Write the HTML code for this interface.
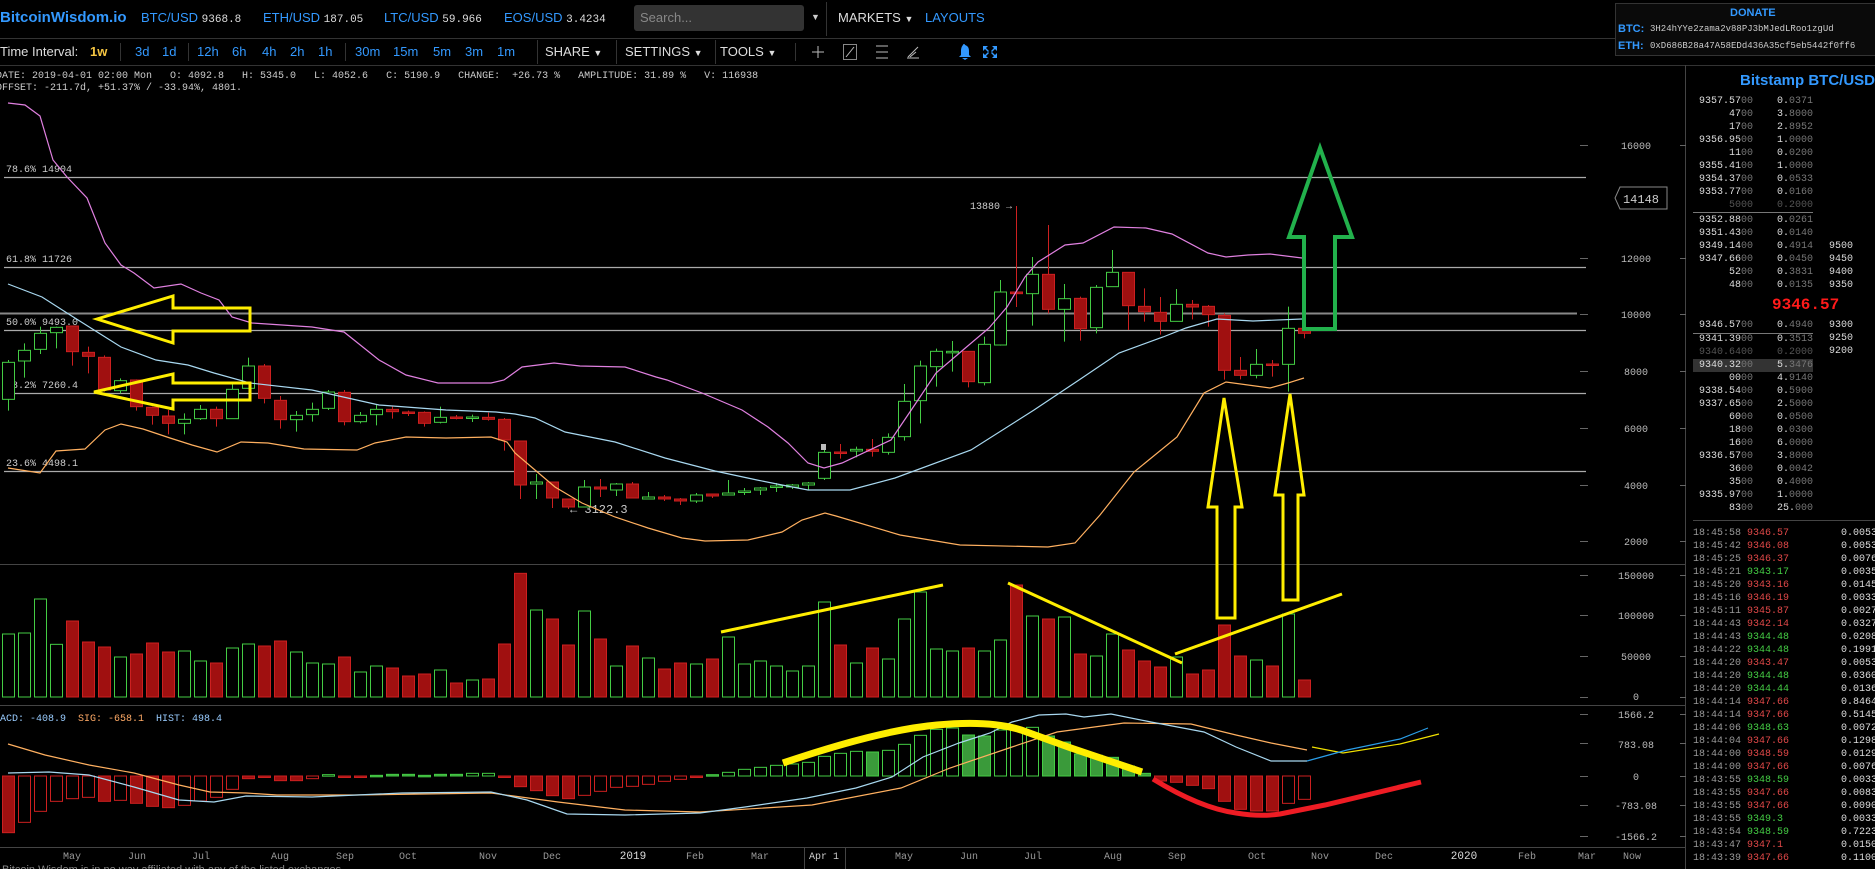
<!DOCTYPE html>
<html><head><meta charset="utf-8">
<style>
html,body{margin:0;padding:0;background:#000;width:1875px;height:869px;overflow:hidden;position:relative;font-family:"Liberation Sans",sans-serif;}
.t{position:absolute;white-space:pre;line-height:1;}
.n{font-family:"Liberation Sans Narrow","Liberation Sans",sans-serif;}
.m{font-family:"Liberation Mono",monospace;}
.b{color:#3399ff}
.w{color:#ddd}
.sep{position:absolute;width:1px;background:#333;}
.ob{position:absolute;font-family:"Liberation Mono",monospace;font-size:10px;color:#ddd;white-space:pre;line-height:13px;}
.ob span.d{color:#777}
.r{color:#e04848}.g{color:#44cc44}
</style></head><body>
<!-- top bar -->
<div class="t n" style="left:0;top:10px;font-size:15px;font-weight:bold;color:#3399ff">BitcoinWisdom.io</div>
<div class="t n b" style="left:141px;top:11px;font-size:13px">BTC/USD <span class="m w" style="font-size:11px">9368.8</span></div>
<div class="t n b" style="left:263px;top:11px;font-size:13px">ETH/USD <span class="m w" style="font-size:11px">187.05</span></div>
<div class="t n b" style="left:384px;top:11px;font-size:13px">LTC/USD <span class="m w" style="font-size:11px">59.966</span></div>
<div class="t n b" style="left:504px;top:11px;font-size:13px">EOS/USD <span class="m w" style="font-size:11px">3.4234</span></div>
<div style="position:absolute;left:634px;top:5px;width:170px;height:26px;background:#333;border-radius:3px"></div>
<div class="t n" style="left:640px;top:11px;font-size:13px;color:#888">Search...</div>
<div class="t" style="left:811px;top:13px;font-size:9px;color:#ccc">▼</div>
<div class="sep" style="left:826px;top:2px;height:34px"></div>
<div class="t n w" style="left:838px;top:11px;font-size:13px">MARKETS <span style="font-size:9px">▼</span></div>
<div class="t n b" style="left:925px;top:11px;font-size:13px">LAYOUTS</div>
<div style="position:absolute;left:0;top:38px;width:1615px;height:1px;background:#333"></div>
<!-- donate -->
<div style="position:absolute;left:1615px;top:3px;width:262px;height:51px;border:1px solid #333;background:#0a0a0a"></div>
<div class="t" style="left:1730px;top:8px;font-size:11px;font-weight:bold;color:#3399ff">DONATE</div>
<div class="t" style="left:1618px;top:24px;font-size:11px;font-weight:bold;color:#3399ff">BTC:</div>
<div class="t m" style="left:1650px;top:25px;font-size:9px;color:#ccc">3H24hYYe2zama2v88PJ3bMJedLRoo1zgUd</div>
<div class="t" style="left:1618px;top:41px;font-size:11px;font-weight:bold;color:#3399ff">ETH:</div>
<div class="t m" style="left:1650px;top:42px;font-size:9px;color:#ccc">0xD686B28a47A58EDd436A35cf5eb5442f0ff6</div>
<!-- toolbar -->
<div class="t n w" style="left:0;top:45px;font-size:13px">Time Interval:</div>
<div class="t n" style="left:90px;top:45px;font-size:13px;color:#f5c542;font-weight:bold">1w</div>
<div class="sep" style="left:120px;top:43px;height:18px"></div>
<div class="t n b" style="left:135px;top:45px;font-size:13px">3d</div>
<div class="t n b" style="left:162px;top:45px;font-size:13px">1d</div>
<div class="sep" style="left:188px;top:43px;height:18px"></div>
<div class="t n b" style="left:197px;top:45px;font-size:13px">12h</div>
<div class="t n b" style="left:232px;top:45px;font-size:13px">6h</div>
<div class="t n b" style="left:262px;top:45px;font-size:13px">4h</div>
<div class="t n b" style="left:290px;top:45px;font-size:13px">2h</div>
<div class="t n b" style="left:318px;top:45px;font-size:13px">1h</div>
<div class="sep" style="left:345px;top:43px;height:18px"></div>
<div class="t n b" style="left:355px;top:45px;font-size:13px">30m</div>
<div class="t n b" style="left:393px;top:45px;font-size:13px">15m</div>
<div class="t n b" style="left:433px;top:45px;font-size:13px">5m</div>
<div class="t n b" style="left:465px;top:45px;font-size:13px">3m</div>
<div class="t n b" style="left:497px;top:45px;font-size:13px">1m</div>
<div class="sep" style="left:537px;top:40px;height:24px"></div>
<div class="t n w" style="left:545px;top:45px;font-size:13px">SHARE <span style="font-size:9px">▼</span></div>
<div class="sep" style="left:616px;top:40px;height:24px"></div>
<div class="t n w" style="left:625px;top:45px;font-size:13px">SETTINGS <span style="font-size:9px">▼</span></div>
<div class="sep" style="left:715px;top:40px;height:24px"></div>
<div class="t n w" style="left:720px;top:45px;font-size:13px">TOOLS <span style="font-size:9px">▼</span></div>
<div class="sep" style="left:795px;top:43px;height:18px"></div>
<svg style="position:absolute;left:810px;top:42px" width="200" height="20">
<g stroke="#bbb" stroke-width="1" fill="none">
<path d="M8 4v12M2 10h12"/>
<rect x="33.5" y="2.5" width="13" height="15" stroke="#888"/><path d="M36 15l8-10"/>
<path d="M66 4h12M66 10h12M66 16h12"/>
<path d="M98 15l10-10M100 15l6-5M97 16h12"/>
</g>
<g fill="#3399ff"><path d="M153 3a1 1 0 0 1 2 0c3 1 4 3 4 6v4l2 2h-12l2-2v-4c0-3 1-5 2-6z"/><path d="M152 16h6l-3 2z"/>
<path d="M173 4h5l-2 2 3 3-1 1-3-3-2 2zM187 4v5l-2-2-3 3-1-1 3-3-2-2zM173 16v-5l2 2 3-3 1 1-3 3 2 2zM187 16h-5l2-2-3-3 1-1 3 3 2-2z"/></g>
</svg>
<div style="position:absolute;left:0;top:65px;width:1875px;height:1px;background:#333"></div>
<div class="t m" style="left:-4px;top:72px;font-size:10px;color:#ccc">DATE: 2019-04-01 02:00 Mon   O: 4092.8   H: 5345.0   L: 4052.6   C: 5190.9   CHANGE:  +26.73 %   AMPLITUDE: 31.89 %   V: 116938</div>
<div class="t m" style="left:-4px;top:84px;font-size:10px;color:#ccc">OFFSET: -211.7d, +51.37% / -33.94%, 4801.</div>

<svg id="ch" style="position:absolute;left:0;top:0" width="1686" height="869">
<g stroke="#444" stroke-width="1">
<line x1="0" y1="564.5" x2="1686" y2="564.5"/>
<line x1="0" y1="705.5" x2="1686" y2="705.5"/>
<line x1="0" y1="847.5" x2="1686" y2="847.5"/>
<line x1="1685.5" y1="65" x2="1685.5" y2="869"/>
<line x1="804.5" y1="847" x2="804.5" y2="869"/>
<line x1="845.5" y1="847" x2="845.5" y2="869"/>
</g>
<g stroke="#aaa" stroke-width="1.2">
<line x1="4" y1="177.5" x2="1586" y2="177.5"/>
<line x1="4" y1="267.5" x2="1586" y2="267.5"/>
<line x1="0" y1="313.5" x2="1577" y2="313.5" stroke="#888" stroke-width="2"/>
<line x1="4" y1="330.5" x2="1586" y2="330.5"/>
<line x1="4" y1="393.5" x2="1586" y2="393.5"/>
<line x1="4" y1="471.5" x2="1586" y2="471.5"/>
</g>
<g font-family="Liberation Mono,monospace" font-size="10" fill="#ccc">
<text x="6" y="172">78.6% 14904</text>
<text x="6" y="262">61.8% 11726</text>
<text x="6" y="325">50.0% 9493.0</text>
<text x="6" y="388">38.2% 7260.4</text>
<text x="6" y="466">23.6% 4498.1</text>
<text x="970" y="209">13880 →</text>
<text x="570" y="513" font-size="12">← 3122.3</text>
</g>
<g id="bands" fill="none" stroke-width="1.2">
<polyline stroke="#e080e0" points="8,103 25,105 40,116 53,160 67,177 87,198 105,243 121,265 134,273 154,288 181,284 201,293 219,300 232,317 252,323 312,327 344,332 379,360 406,375 438,383 491,383 504,380 522,367 554,363 580,366 625,367 656,377 667,380 702,393 742,410 768,427 788,443 808,463 824,468 842,463 891,440 918,400 936,373 963,350 989,328 1007,307 1025,277 1038,262 1065,245 1083,243 1114,227 1146,228 1172,234 1208,253 1226,257 1248,255 1270,254 1302,258"/>
<polyline stroke="#a8d8f0" points="8,284 42,297 67,313 94,330 121,347 156,360 188,365 214,373 250,383 312,390 379,405 446,410 496,412 515,414 535,418 565,432 615,442 665,458 715,471 757,480 782,485 808,490 850,490 895,478 971,450 1034,410 1079,380 1119,353 1163,337 1186,328 1217,319 1253,321 1302,319"/>
<polyline stroke="#ffb060" points="8,468 40,473 56,451 85,449 105,430 121,424 143,429 170,438 192,445 217,452 241,442 268,443 304,449 357,450 375,443 406,437 446,438 491,437 507,442 515,453 535,470 555,487 582,503 615,517 648,528 682,538 705,541 748,540 782,532 802,520 825,513 836,516 900,535 960,545 1048,547 1075,543 1100,515 1134,472 1177,437 1204,393 1226,382 1270,388 1288,383 1304,378"/>
<polyline stroke="#ffb060" points="8,744 45,755 89,765 134,773 179,785 210,792 246,793 277,795 357,795 491,793 558,802 625,810 700,812 812,805 901,788 950,768 1012,747 1057,732 1124,723 1191,724 1236,735 1271,743 1307,750"/>
<polyline stroke="#a8d8f0" points="8,773 49,772 89,775 134,787 179,800 214,802 246,796 312,797 402,793 491,792 527,800 567,814 625,815 700,813 745,807 807,798 856,788 892,777 923,757 959,743 990,733 1012,722 1039,715 1066,714 1084,717 1111,714 1151,722 1204,732 1236,747 1271,761 1307,761"/>
<polyline stroke="#f0e000" points="1312,747 1343,753 1400,744 1439,734"/>
<polyline stroke="#2a9ee8" points="1307,761 1347,750 1400,739 1428,728"/>
</g>
<g id="bars"></g>
<rect x="821" y="444" width="5" height="6" fill="#bbb"/>
<!-- annotations -->
<g fill="none" stroke="#ffee00" stroke-width="3" stroke-linejoin="miter">
<polygon points="97,319 173,296 173,308 250,308 250,331 173,331 173,343"/>
<polygon points="94,392 173,374 173,383 250,383 250,400 173,400 173,409"/>
<polygon points="1224,398 1242,507 1235,507 1235,618 1217,618 1217,507 1208,507"/>
<polygon points="1290,394 1304,495 1298,495 1298,600 1283,600 1283,495 1275,495"/>
<line x1="721" y1="632" x2="943" y2="585"/>
<line x1="1008" y1="583" x2="1182" y2="663"/>
<line x1="1175" y1="654" x2="1342" y2="594"/>
<path d="M783,763 Q880,730 937,725 Q990,720 1021,730 L1071,748 L1142,772" stroke-width="7"/>
</g>
<polygon points="1320,148 1352,237 1335,237 1335,329 1304,329 1304,237 1289,237" fill="none" stroke="#22b14c" stroke-width="4"/>
<path d="M1153,779 Q1200,808 1236,813 Q1260,817 1280,814 L1325,805 L1421,782" fill="none" stroke="#ee1c24" stroke-width="5"/>
<!-- axis ticks -->
<g stroke="#666"><path id="ticks" d=""/></g>
<g font-family="Liberation Mono,monospace" font-size="10" fill="#bbb" text-anchor="middle">
<text x="1636" y="149">16000</text>
<text x="1636" y="262">12000</text>
<text x="1636" y="318">10000</text>
<text x="1636" y="375">8000</text>
<text x="1636" y="432">6000</text>
<text x="1636" y="489">4000</text>
<text x="1636" y="545">2000</text>
<text x="1636" y="579">150000</text>
<text x="1636" y="619">100000</text>
<text x="1636" y="660">50000</text>
<text x="1636" y="700">0</text>
<text x="1636" y="718">1566.2</text>
<text x="1636" y="748">783.08</text>
<text x="1636" y="780">0</text>
<text x="1636" y="809">-783.08</text>
<text x="1636" y="840">-1566.2</text>
</g>
<path d="M1620,187 H1667 V209 H1620 L1615,198 Z" fill="#000" stroke="#888"/>
<text x="1641" y="203" font-family="Liberation Mono,monospace" font-size="12" fill="#ccc" text-anchor="middle">14148</text>
<g font-family="Liberation Mono,monospace" font-size="10" fill="#999" text-anchor="middle">
<text x="72" y="859">May</text><text x="137" y="859">Jun</text><text x="201" y="859">Jul</text><text x="280" y="859">Aug</text>
<text x="345" y="859">Sep</text><text x="408" y="859">Oct</text><text x="488" y="859">Nov</text><text x="552" y="859">Dec</text>
<text x="633" y="859" fill="#ddd" font-size="11">2019</text><text x="695" y="859">Feb</text><text x="760" y="859">Mar</text>
<text x="824" y="859" fill="#ccc">Apr 1</text><text x="904" y="859">May</text><text x="969" y="859">Jun</text><text x="1033" y="859">Jul</text>
<text x="1113" y="859">Aug</text><text x="1177" y="859">Sep</text><text x="1257" y="859">Oct</text><text x="1320" y="859">Nov</text>
<text x="1384" y="859">Dec</text><text x="1464" y="859" fill="#ddd" font-size="11">2020</text><text x="1527" y="859">Feb</text>
<text x="1587" y="859">Mar</text><text x="1632" y="859">Now</text>
</g>
<text x="-6" y="721" font-family="Liberation Mono,monospace" font-size="10"><tspan fill="#9cf">MACD: -408.9</tspan><tspan fill="#fa6" dx="12">SIG: -658.1</tspan><tspan fill="#9cf" dx="12">HIST: 498.4</tspan></text>
<text x="2" y="873" font-family="Liberation Sans,sans-serif" font-size="11" fill="#888">Bitcoin Wisdom is in no way affiliated with any of the listed exchanges</text>
</svg>

<!-- right panel -->
<div class="t" style="left:1740px;top:73px;font-size:15px;font-weight:bold;color:#3399ff">Bitstamp BTC/USD</div>
<div class="ob" style="left:1693px;top:95px;width:60px;text-align:right">9357.57<span class="d">00</span>
47<span class="d">00</span>
17<span class="d">00</span>
9356.95<span class="d">00</span>
11<span class="d">00</span>
9355.41<span class="d">00</span>
9354.37<span class="d">00</span>
9353.77<span class="d">00</span>
<span style="color:#555">5000</span></div>
<div class="ob" style="left:1753px;top:95px;width:60px;text-align:right">0.<span class="d">0371</span>
3.<span class="d">8000</span>
2.<span class="d">8952</span>
1.<span class="d">0000</span>
0.<span class="d">0200</span>
1.<span class="d">0000</span>
0.<span class="d">0533</span>
0.<span class="d">0160</span>
<span style="color:#555">0.2000</span></div>
<div style="position:absolute;left:1693px;top:212px;width:120px;height:1px;background:#777"></div>
<div class="ob" style="left:1693px;top:214px;width:60px;text-align:right">9352.88<span class="d">00</span>
9351.43<span class="d">00</span>
9349.14<span class="d">00</span>
9347.66<span class="d">00</span>
52<span class="d">00</span>
48<span class="d">00</span></div>
<div class="ob" style="left:1753px;top:214px;width:60px;text-align:right">0.<span class="d">0261</span>
0.<span class="d">0140</span>
0.<span class="d">4914</span>
0.<span class="d">0450</span>
0.<span class="d">3831</span>
0.<span class="d">0135</span></div>
<div class="ob" style="left:1829px;top:240px">9500
9450
9400
9350</div>
<div class="t m" style="left:1772px;top:297px;font-size:16px;font-weight:bold;color:#ff1a1a">9346.57</div>
<div class="ob" style="left:1693px;top:319px;width:60px;text-align:right">9346.57<span class="d">00</span></div>
<div class="ob" style="left:1753px;top:319px;width:60px;text-align:right">0.<span class="d">4940</span></div>
<div style="position:absolute;left:1693px;top:333px;width:120px;height:1px;background:#777"></div>
<div style="position:absolute;left:1693px;top:359px;width:120px;height:13px;background:#333"></div>
<div class="ob" style="left:1693px;top:333px;width:60px;text-align:right">9341.39<span class="d">00</span>
<span style="color:#555">9340.6400</span>
9340.32<span class="d">00</span>
00<span class="d">00</span>
9338.54<span class="d">00</span>
9337.65<span class="d">00</span>
60<span class="d">00</span>
18<span class="d">00</span>
16<span class="d">00</span>
9336.57<span class="d">00</span>
36<span class="d">00</span>
35<span class="d">00</span>
9335.97<span class="d">00</span>
83<span class="d">00</span></div>
<div class="ob" style="left:1753px;top:333px;width:60px;text-align:right">0.<span class="d">3513</span>
<span style="color:#555">0.2000</span>
5.<span class="d">3476</span>
4.<span class="d">9140</span>
0.<span class="d">5900</span>
2.<span class="d">5000</span>
0.<span class="d">0500</span>
0.<span class="d">0300</span>
6.<span class="d">0000</span>
3.<span class="d">8000</span>
0.<span class="d">0042</span>
0.<span class="d">4000</span>
1.<span class="d">0000</span>
25.<span class="d">000</span></div>
<div class="ob" style="left:1829px;top:319px">9300
9250
9200</div>
<div style="position:absolute;left:1693px;top:520px;width:182px;height:1px;background:#444"></div>
<div class="ob" style="left:1693px;top:527px;color:#999">18:45:58 <span class="r">9346.57</span>
18:45:42 <span class="r">9346.08</span>
18:45:25 <span class="r">9346.37</span>
18:45:21 <span class="g">9343.17</span>
18:45:20 <span class="r">9343.16</span>
18:45:16 <span class="r">9346.19</span>
18:45:11 <span class="r">9345.87</span>
18:44:43 <span class="r">9342.14</span>
18:44:43 <span class="g">9344.48</span>
18:44:22 <span class="g">9344.48</span>
18:44:20 <span class="r">9343.47</span>
18:44:20 <span class="g">9344.48</span>
18:44:20 <span class="g">9344.44</span>
18:44:14 <span class="r">9347.66</span>
18:44:14 <span class="r">9347.66</span>
18:44:06 <span class="g">9348.63</span>
18:44:04 <span class="r">9347.66</span>
18:44:00 <span class="r">9348.59</span>
18:44:00 <span class="r">9347.66</span>
18:43:55 <span class="g">9348.59</span>
18:43:55 <span class="r">9347.66</span>
18:43:55 <span class="r">9347.66</span>
18:43:55 <span class="g">9349.3</span>
18:43:54 <span class="g">9348.59</span>
18:43:47 <span class="r">9347.1</span>
18:43:39 <span class="r">9347.66</span></div>
<div class="ob" style="left:1841px;top:527px">0.0053
0.0053
0.0076
0.0035
0.0145
0.0033
0.0027
0.0327
0.0208
0.1991
0.0053
0.0360
0.0136
0.8464
0.5145
0.0072
0.1298
0.0129
0.0076
0.0033
0.0083
0.0090
0.0033
0.7223
0.0150
0.1100</div>

<script>
(function(){
var NS="http://www.w3.org/2000/svg",g=document.getElementById("bars");
function el(t,a){var e=document.createElementNS(NS,t);for(var k in a)e.setAttribute(k,a[k]);g.appendChild(e);return e;}
var GS="#44cc44",RF="#a01010",RS="#cc2020";
// candles (zoom coords for 0-31 and 51-81)
var cz=[["G",847,958,840,992],["G",811,843,790,893],["G",760,808,740,822],["G",742,758,740,805],["R",738,815,738,857],["R",817,829,800,880],["R",832,930,826,935],["G",902,932,895,940],["R",900,980,898,992],["R",982,1006,980,1034],["R",1008,1030,990,1063],["G",1018,1030,1000,1063],["G",988,1016,975,1020],["R",988,1016,980,1040],["G",928,1016,910,1016],["G",858,925,833,925],["R",858,955,852,970],["R",961,1019,948,1046],["G",1006,1019,993,1055],["G",988,1004,968,1025],["G",936,985,930,990],["R",937,1025,930,1036],["G",1006,1025,996,1030],["G",988,1004,975,1036],["R",988,995,980,1016],["R",996,999,992,1008],["R",997,1030,994,1040],["G",1012,1027,980,1030],["R",1011,1013,1005,1018],["G",1011,1013,1004,1026],["R",1012,1018,998,1022],["R",1018,1080,1014,1112]];
var ct=[["R",441,485,441,499],["G",482,484,474,499],["R",482,498,482,508],["R",499,507,499,509],["G",487,507,480,507],["R",487,489,479,497],["G",484,490,483,496],["R",484,498,482,498],["G",497,499,492,499],["R",497,499,495,501],["R",499,501,498,505],["G",495,501,493,503],["R",494,496,494,498],["G",493,495,480,495],["G",491,492,488,495],["G",488,490,487,495],["G",486,487,483,492],["G",485,487,484,489],["G",483,485,482,490]];
var cz2=[["G",1117,1195,1095,1200],["R",1116,1118,1092,1136],["G",1108,1113,1100,1132],["R",1108,1114,1077,1130],["G",1072,1117,1060,1124],["G",964,1070,912,1082],["G",858,962,842,1030],["G",814,860,806,920],["G",814,816,783,875],["R",814,905,814,922],["G",793,908,770,916],["G",636,795,600,797],["R",636,641,378,681],["G",583,641,531,737],["R",583,688,435,700],["G",656,688,612,785],["R",655,746,650,782],["G",622,743,615,760],["G",577,620,510,620],["R",577,677,577,750],["R",679,695,625,725],["R",697,724,651,764],["G",673,724,627,724],["R",673,681,660,718],["R",679,704,675,740],["R",706,871,700,899],["R",871,886,831,898],["G",853,886,807,895],["R",852,854,840,890],["G",745,853,680,935],["R",745,760,745,775]];
function cv(a){return [a[0],80+a[1]/3,80+a[2]/3,80+a[3]/3,80+a[4]/3];}
var C=cz.map(cv).concat(ct).concat(cz2.map(cv));
C.forEach(function(c,i){
 var x=2+16*i,cx=x+6.5,gr=c[0]=="G",col=gr?GS:RS;
 el("line",{x1:cx,x2:cx,y1:c[3],y2:c[4],stroke:col,"stroke-width":1});
 var h=Math.max(c[2]-c[1],1.5);
 el("rect",{x:x+0.5,y:c[1],width:12,height:h,fill:gr?"#000":RF,stroke:col,"stroke-width":1});
});
// volume
var v="G162 G159 G57 G193 R123 R186 R201 G231 R222 R189 R216 G213 G243 R249 G204 G192 R198 R183 G216 G249 G252 R231 G276 G258 R264 R288 R282 G270 R309 G300 R297 R192 R-20 G90 R117 R195 G93 R177 G258 R198 G234 R267 R249 G252 R237 G171 G252 G243 G258 G273 G258 G66 R195 G249 R204 G237 G117 G36 G207 G213 R204 G213 G180 R15 G108 R117 G111 R222 G228 G162 R210 R243 R261 G231 R282 R270 R135 R228 G240 R258 G102 R300".split(" ");
v.forEach(function(s,i){
 var gr=s[0]=="G",top=580+parseFloat(s.slice(1))/3,x=2+16*i;
 el("rect",{x:x+0.5,y:top,width:12,height:697-top,fill:gr?"#000":RF,stroke:gr?GS:RS,"stroke-width":1});
});
// macd hist
var hd="758F 727H 694H 664H 656H 652H 664F 661H 670F 679F 683F 676H 663H 652H 628H 596F 592F 602F 602F 596H 584H 590F 590F 586F 583F 583F 586F 583F 583F 580H 580H 590F 620F 632F 647F 656F 646H 634H 622H 619H 613H 604H 598H 590F 584F 577H 568H 562H 556H 552H 547H 529H 520H 514H 516F 511H 493H 466H 448H 444H 465F 468F 450H 445H 442H 468F 486F 522F 526F 532F 558F 580F 603F 607F 616F 626F 664F 688F 693F 693F 670H 658H".split(" ");
var Z=776;
hd.forEach(function(s,i){
 var y=580+parseFloat(s)/3,f=s.slice(-1)=="F",x=2+16*i,up=y<Z;
 var t=Math.min(y,Z),h=Math.max(Math.abs(y-Z),1.5);
 var sc=up?GS:RS,fc=up?"#3a9a3a":RF;
 el("rect",{x:x+0.5,y:t,width:12,height:h,fill:f?fc:"#000",stroke:sc,"stroke-width":1});
});
// ticks
var ys=[145,258,314,371,428,485,541,575,615,656,697,714,743,776,805,836],d="";
ys.forEach(function(y){d+="M1580 "+(y+0.5)+"h8M1680 "+(y+0.5)+"h6";});
document.getElementById("ticks").setAttribute("d",d);
// move annotations & bands on top of bars
var svg=document.getElementById("ch");svg.insertBefore(g,document.getElementById("bands"));
})();
</script>
</body></html>
